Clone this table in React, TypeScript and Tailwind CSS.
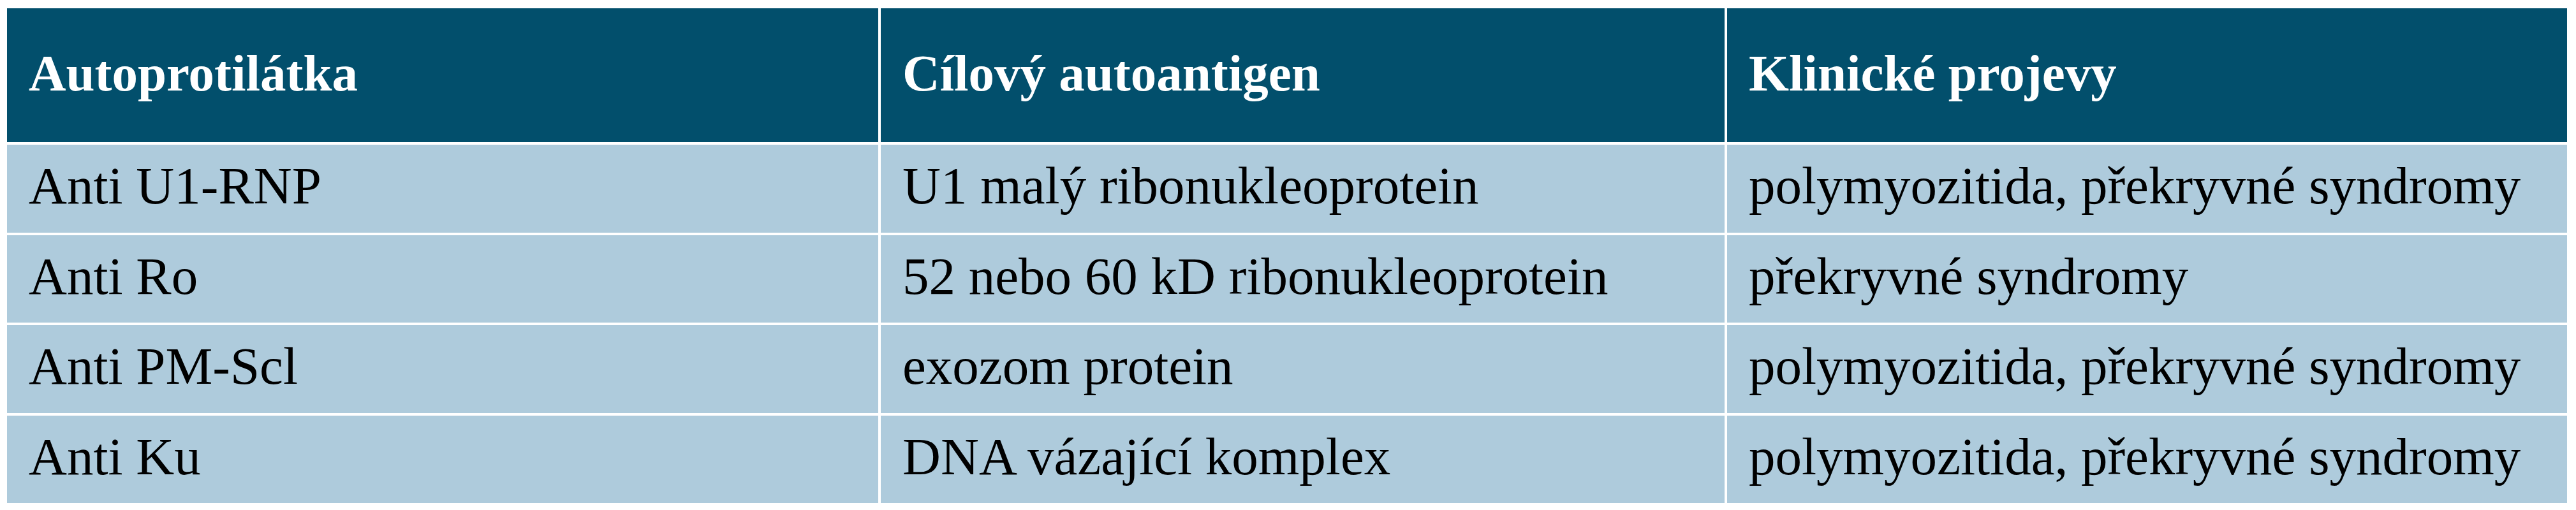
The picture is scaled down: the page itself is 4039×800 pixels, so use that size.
import React from "react";

const headers = ["Autoprotilátka", "Cílový autoantigen", "Klinické projevy"];

const rows: string[][] = [
  ["Anti U1-RNP", "U1 malý ribonukleoprotein", "polymyozitida, překryvné syndromy"],
  ["Anti Ro", "52 nebo 60 kD ribonukleoprotein", "překryvné syndromy"],
  ["Anti PM-Scl", "exozom protein", "polymyozitida, překryvné syndromy"],
  ["Anti Ku", "DNA vázající komplex", "polymyozitida, překryvné syndromy"],
];

export default function App() {
  return (
    <div className="min-h-[800px] w-[4039px] bg-white pl-[11px] pt-[13px] font-['Liberation_Serif',serif]">
      <div className="grid w-[4014px] grid-cols-[1366px_1323px_1317px] grid-rows-[210px_137.5px_137.5px_137.5px_137.5px] gap-[4px] bg-white">
        {headers.map((h) => (
          <div
            key={h}
            className="flex items-center bg-[#024f6c] pl-[34px] pb-[6px] text-[81px] font-bold leading-none text-white"
          >
            {h}
          </div>
        ))}
        {rows.map((r) =>
          r.map((cell, i) => (
            <div
              key={r[0] + i}
              className="flex items-center bg-[#aecbdc] pl-[34px] pb-[8px] text-[83px] leading-none text-black"
            >
              {cell}
            </div>
          ))
        )}
      </div>
    </div>
  );
}
